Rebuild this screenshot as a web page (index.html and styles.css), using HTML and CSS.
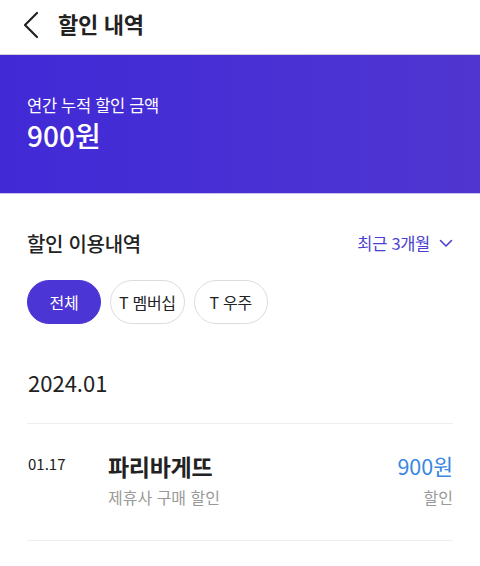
FILE: index.html
```html
<!DOCTYPE html>
<html lang="ko">
<head>
<meta charset="utf-8">
<link rel="stylesheet" href="styles.css">
</head>
<body>
<header class="topbar">
  <svg class="back" width="18" height="28" viewBox="0 0 18 28"><path d="M15 2 L3 14 L15 26" fill="none" stroke="#222" stroke-width="2.2" stroke-linecap="round" stroke-linejoin="round"/></svg>
  <h1 class="title">할인 내역</h1>
</header>
<section class="banner">
  <div class="banner-label">연간 누적 할인 금액</div>
  <div class="banner-amount">900원</div>
</section>
<main class="content">
  <div class="section-head">
    <h2 class="section-title">할인 이용내역</h2>
    <div class="period">최근 3개월
      <svg width="14" height="9" viewBox="0 0 14 9"><path d="M1.5 1.5 L7 7 L12.5 1.5" fill="none" stroke="#4a3fd0" stroke-width="1.6" stroke-linecap="round" stroke-linejoin="round"/></svg>
    </div>
  </div>
  <div class="chips">
    <span class="chip chip-active">전체</span>
    <span class="chip">T 멤버십</span>
    <span class="chip">T 우주</span>
  </div>
  <div class="month">2024.01</div>
  <div class="row">
    <div class="date">01.17</div>
    <div class="info">
      <div class="store">파리바게뜨</div>
      <div class="desc">제휴사 구매 할인</div>
    </div>
    <div class="amount">
      <div class="value">900원</div>
      <div class="desc">할인</div>
    </div>
  </div>
</main>
</body>
</html>
```
FILE: styles.css
```css
* { box-sizing: border-box; margin: 0; padding: 0; }
body {
  margin: 0;
  font-family: "Noto Sans CJK KR", "Noto Sans", sans-serif;
  background: #fff;
  color: #222;
  width: 480px;
}
.topbar {
  height: 55px;
  display: flex;
  align-items: center;
  padding-left: 22px;
  border-bottom: 1px solid #cfcfd6;
}
.back { display: block; margin-top: -4px; }
.title {
  font-size: 22px;
  font-weight: 700;
  margin-left: 18px;
  margin-top: -8px;
  color: #222;
  letter-spacing: -0.3px;
}
.banner {
  height: 139px;
  background: linear-gradient(90deg, #4129d6 0%, #4931d4 60%, #5035d0 100%);
  border-bottom: 1px solid #c9c2ee;
  padding: 38px 27px 0;
  color: #fff;
}
.banner-label { font-size: 16.5px; line-height: 24px; letter-spacing: -0.3px; }
.banner-amount { font-size: 28px; font-weight: 500; line-height: 36px; margin-top: 0; }
.content { padding: 0 27px 0 27px; }
.section-head {
  display: flex;
  justify-content: space-between;
  align-items: center;
  margin-top: 33px;
  height: 32px;
}
.section-title { font-size: 20px; font-weight: 500; color: #222; letter-spacing: -0.3px; }
.period {
  display: flex;
  align-items: center;
  gap: 9px;
  font-size: 16.5px;
  color: #4a3fd0;
  letter-spacing: -0.3px;
}
.chips { display: flex; gap: 9px; margin-top: 21px; }
.chip {
  height: 44px;
  min-width: 74px;
  padding: 0 8px;
  border: 1px solid #dcdce0;
  border-radius: 22px;
  display: flex;
  align-items: center;
  justify-content: center;
  font-size: 16px;
  color: #222;
  letter-spacing: -0.3px;
}
.chip-active { background: #4b35d4; border-color: #4b35d4; color: #fff; }
.month { font-size: 22px; margin-top: 43px; line-height: 30px; color: #222; margin-left: 1px; }
.row {
  display: flex;
  margin-top: 26px;
  border-top: 1px solid #eeeef0;
  border-bottom: 1px solid #eeeef0;
  padding: 26px 0 31px;
}
.date { width: 81px; font-size: 15px; line-height: 28px; color: #222; padding-left: 1px; }
.info { flex: 1; }
.store { font-size: 23px; font-weight: 700; line-height: 32px; letter-spacing: -0.3px; }
.desc { font-size: 16px; color: #999; line-height: 24px; margin-top: 3px; }
.amount { text-align: right; }
.value { font-size: 21.5px; color: #3a86e0; line-height: 32px; font-weight: 400; }
```
